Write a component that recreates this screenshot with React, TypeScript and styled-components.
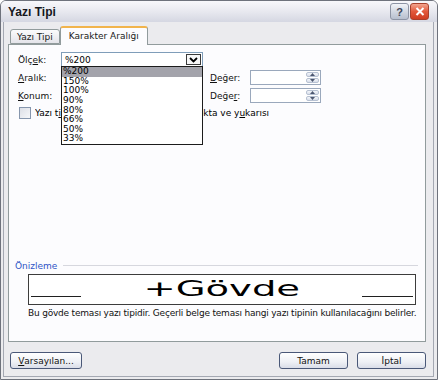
import React from 'react';
import styled, { createGlobalStyle } from 'styled-components';

const GlobalStyle = createGlobalStyle`
  html, body {
    margin: 0;
    padding: 0;
    background: #ffffff;
  }
  body {
    font-family: 'DejaVu Sans', sans-serif;
    font-size: 9px;
    color: #000000;
  }
`;

const Window = styled.div`
  width: 438px;
  height: 380px;
  box-sizing: border-box;
  display: flex;
  flex-direction: column;
  overflow: hidden;

  border: 1px solid #6e727c;
  border-radius: 6px 6px 0 0;
  background: #ebebee;
`;

const TitleBar = styled.div`
  height: 21px;
  display: flex;
  align-items: center;
  padding: 0 8px 0 7px;

  background: linear-gradient(#f8f8fb, #e6e7ee 55%, #d5d7e2);
`;

const Title = styled.div`
  flex: 1;
  font: bold 12px 'Liberation Sans', sans-serif;
  color: #15171c;
`;

const CaptionButton = styled.div<{ $close?: boolean }>`
  width: 17px;
  height: 15px;
  margin-left: 1px;
  display: flex;
  align-items: center;
  justify-content: center;

  border: 1px solid ${(p) => (p.$close ? '#a8402c' : '#8d94a4')};
  border-radius: 3px;
  background: ${(p) =>
    p.$close
      ? 'linear-gradient(#f3a48e, #e2593c 50%, #cf3d22)'
      : 'linear-gradient(#f2f4f8, #cfd5e0 55%, #b7bfce)'};
  font: bold 11px 'Liberation Sans', sans-serif;
  color: #3e4658;
`;

const Body = styled.div`
  flex: 1;
  display: flex;
  flex-direction: column;
  margin: 0 3px 2px 2px;
  padding: 4px 7px 0 4px;

  border: 1px solid #a4a8b2;
  border-top: none;
`;

const Tabs = styled.div`
  height: 18px;
  display: flex;
  align-items: flex-end;
  padding-left: 2px;
  position: relative;
  z-index: 1;
`;

const Tab = styled.div<{ $active?: boolean }>`
  box-sizing: border-box;
  height: ${(p) => (p.$active ? '19px' : '15px')};
  margin-bottom: ${(p) => (p.$active ? '-1px' : '0')};
  padding: ${(p) => (p.$active ? '3px 8px 0' : '2px 6px 0')};

  border: 1px solid #919b9c;
  border-bottom: ${(p) => (p.$active ? 'none' : '1px solid #919b9c')};
  border-top: ${(p) => (p.$active ? '2px solid #f1b44c' : '1px solid #919b9c')};
  border-radius: 3px 3px 0 0;
  background: ${(p) => (p.$active ? '#fcfcfe' : 'linear-gradient(#fbfbfc, #e4e4ea)')};
  color: #1a1a1a;
  white-space: nowrap;
`;

const Panel = styled.div`
  position: relative;
  height: 298px;
  box-sizing: border-box;
  display: flex;
  flex-direction: column;
  padding: 7px 9px 23px 9px;

  border: 1px solid #919b9c;
  background: #fcfcfe;
`;

const FieldGrid = styled.div`
  display: grid;
  grid-template-columns: 43px 142px 47px 71px;
  grid-template-rows: 15px 15px 15px;
  row-gap: 3px;
  align-items: center;
`;

const Label = styled.span<{ $indent?: boolean }>`
  padding-left: ${(p) => (p.$indent ? '7px' : '0')};
  color: #111111;
  white-space: nowrap;
`;

const Combo = styled.div`
  height: 15px;
  box-sizing: border-box;
  display: flex;
  align-items: center;
  padding: 0 1px 0 3px;

  border: 1px solid #7f9db9;
  background: #ffffff;
`;

const ComboText = styled.span`
  flex: 1;
`;

const ComboArrow = styled.div`
  width: 15px;
  height: 11px;
  box-sizing: border-box;
  display: flex;
  align-items: center;
  justify-content: center;

  border: 1px solid #3a3a3a;
  background: #f7f7f7;
`;

const Spin = styled.div`
  height: 15px;
  box-sizing: border-box;
  display: flex;
  justify-content: flex-end;
  padding: 1px;

  border: 1px solid #9aa8bc;
  background: #ffffff;
`;

const SpinButtons = styled.div`
  width: 13px;
  display: flex;
  flex-direction: column;
  gap: 1px;
`;

const SpinButton = styled.div`
  flex: 1;
  display: flex;
  align-items: center;
  justify-content: center;

  border: 1px solid #b7c1d2;
  border-radius: 2px;
  background: linear-gradient(#f4f6fa, #d8deea);
`;

const DropList = styled.div`
  position: absolute;
  left: 52px;
  top: 21px;
  width: 142px;
  height: 79px;
  box-sizing: border-box;
  z-index: 2;

  border: 1px solid #1c1c1c;
  background: #ffffff;
`;

const DropItem = styled.div<{ $selected?: boolean }>`
  height: 9.65px;
  line-height: 9.65px;
  padding-left: 1px;

  background: ${(p) => (p.$selected ? '#a3a3ab' : 'transparent')};
`;

const CheckRow = styled.div`
  display: flex;
  align-items: center;
  margin-top: 4px;
  padding-left: 1px;
  white-space: nowrap;
`;

const CheckBox = styled.div`
  width: 12px;
  height: 12px;
  box-sizing: border-box;
  margin-right: 4px;

  border: 1px solid #8696ad;
  background: linear-gradient(135deg, #dcdfe6, #f6f7f9);
`;

const LeadText = styled.span`
  display: inline-block;
  width: 157px;
  overflow: hidden;
`;

const Preview = styled.div`
  margin: auto -2px 0 -3px;
  display: flex;
  flex-direction: column;
`;

const PreviewHeader = styled.div`
  height: 11px;
  display: flex;
  align-items: center;
  gap: 6px;
  color: #2f55c6;

  &::after {
    content: '';
    flex: 1;
    height: 1px;
    background: #d6d7de;
  }
`;

const PreviewBox = styled.div`
  height: 31px;
  box-sizing: border-box;
  margin: 3px 2px 0 13px;
  display: flex;
  align-items: center;
  padding: 0 2px;

  border: 1px solid #3c3c3c;
  background: #ffffff;
`;

const Rule = styled.div<{ $w: number }>`
  width: ${(p) => p.$w}px;
  height: 1px;
  align-self: flex-end;
  margin-bottom: 7px;
  background: #202020;
`;

const Sample = styled.div`
  flex: 1;
  text-align: center;
`;

const SampleText = styled.span`
  display: inline-block;
  transform: scaleX(1.75);
  font-size: 22px;
  line-height: 22px;
  margin-top: -1px;
`;

const Description = styled.div`
  margin: 3px 0 0 13px;
  white-space: nowrap;
  letter-spacing: -0.2px;
  color: #111111;
`;

const Footer = styled.div`
  display: flex;
  align-items: center;
  gap: 9px;
  padding: 10px 0 0 2px;
`;

const Button = styled.div<{ $w: number }>`
  width: ${(p) => p.$w}px;
  height: 17px;
  box-sizing: border-box;
  display: flex;
  align-items: center;
  justify-content: center;

  border: 1px solid #4a5878;
  border-radius: 3px;
  background: linear-gradient(#ffffff, #eef0f5 60%, #d9dde8);
  color: #111111;

  &:first-child {
    margin-right: auto;
  }
`;

const Chevron = () => (
  <svg width="9" height="6" viewBox="0 0 9 6">
    <path d="M1 1 L4.5 4.5 L8 1" fill="none" stroke="#000" strokeWidth="1.8" />
  </svg>
);

const Arrow = ({ up }: { up?: boolean }) => (
  <svg width="5" height="3" viewBox="0 0 5 3">
    <path d={up ? 'M0 3 L2.5 0 L5 3 Z' : 'M0 0 L2.5 3 L5 0 Z'} fill="#4d5870" />
  </svg>
);

const Spinner = () => (
  <Spin>
    <SpinButtons>
      <SpinButton>
        <Arrow up />
      </SpinButton>
      <SpinButton>
        <Arrow />
      </SpinButton>
    </SpinButtons>
  </Spin>
);

const scales = ['%200', '150%', '100%', '90%', '80%', '66%', '50%', '33%'];

const App = () => {
  return (
    <>
      <GlobalStyle />
      <Window>
        <TitleBar>
          <Title>Yazı Tipi</Title>
          <CaptionButton>?</CaptionButton>
          <CaptionButton $close>
            <svg width="10" height="9" viewBox="0 0 10 9">
              <path d="M1.5 1 L8.5 8 M8.5 1 L1.5 8" stroke="#ffffff" strokeWidth="2" />
            </svg>
          </CaptionButton>
        </TitleBar>
        <Body>
          <Tabs>
            <Tab>Yazı Tipi</Tab>
            <Tab $active>Karakter Aralığı</Tab>
          </Tabs>
          <Panel>
            <FieldGrid>
              <Label>
                Ölç<u>e</u>k:
              </Label>
              <Combo>
                <ComboText>%200</ComboText>
                <ComboArrow>
                  <Chevron />
                </ComboArrow>
              </Combo>
              <span />
              <span />

              <Label>
                <u>A</u>ralık:
              </Label>
              <Combo />
              <Label $indent>
                <u>D</u>eğer:
              </Label>
              <Spinner />

              <Label>
                <u>K</u>onum:
              </Label>
              <Combo />
              <Label $indent>
                Değe<u>r</u>:
              </Label>
              <Spinner />
            </FieldGrid>
            <CheckRow>
              <CheckBox />
              <LeadText>
                Yazı t<u>i</u>pleri için karakter aralığı:
              </LeadText>
              <span>
                nokta ve y<u>u</u>karısı
              </span>
            </CheckRow>

            <DropList>
              {scales.map((s, i) => (
                <DropItem key={s} $selected={i === 0}>
                  {s}
                </DropItem>
              ))}
            </DropList>

            <Preview>
              <PreviewHeader>Önizleme</PreviewHeader>
              <PreviewBox>
                <Rule $w={50} />
                <Sample>
                  <SampleText>+Gövde</SampleText>
                </Sample>
                <Rule $w={51} />
              </PreviewBox>
              <Description>
                Bu gövde teması yazı tipidir. Geçerli belge teması hangi yazı tipinin kullanılacağını belirler.
              </Description>
            </Preview>
          </Panel>
          <Footer>
            <Button $w={72}>
              <u>V</u>arsayılan...
            </Button>
            <Button $w={69}>Tamam</Button>
            <Button $w={69}>İptal</Button>
          </Footer>
        </Body>
      </Window>
    </>
  );
};

export default App;
